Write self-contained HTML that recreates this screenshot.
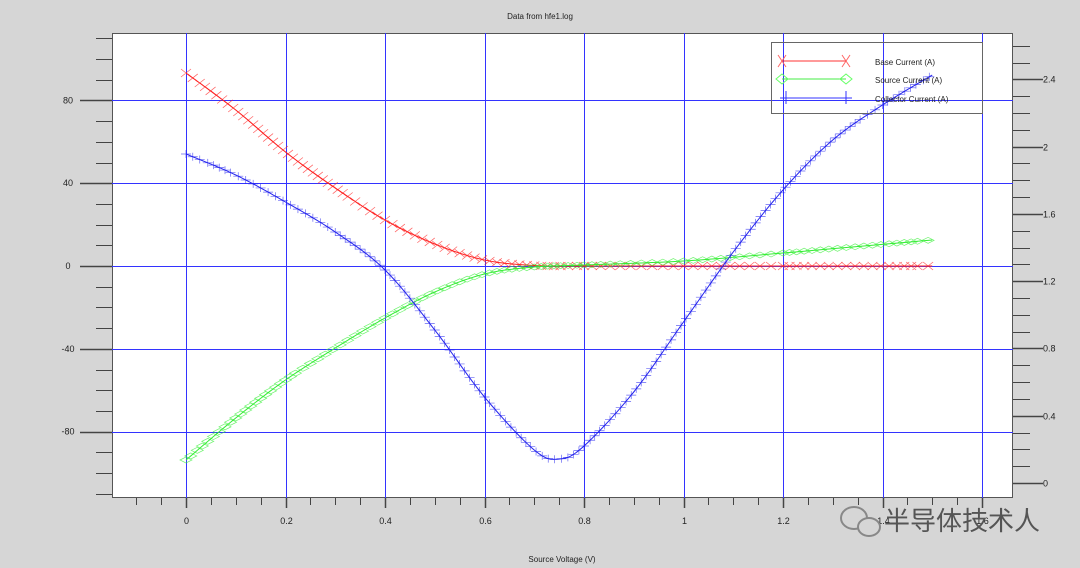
<!DOCTYPE html>
<html><head><meta charset="utf-8"><style>
html,body{margin:0;padding:0;background:#d6d6d6;width:1080px;height:568px;overflow:hidden}
svg{display:block}
text{font-family:"Liberation Sans",sans-serif;font-size:9px;fill:#222}
</style></head><body>
<svg id="s" width="1080" height="568" xmlns="http://www.w3.org/2000/svg">
<rect x="0" y="0" width="1080" height="568" fill="#d6d6d6"/>
<rect x="112.5" y="33.5" width="900" height="464" fill="#fff" stroke="#555" stroke-width="1"/>
<g id="grid" stroke="#3333ff" stroke-width="1"></g>
<g id="ticks" stroke="#444" stroke-width="1"></g>
<g id="labels"></g>
<g id="curves"></g>
<rect x="771.5" y="42.5" width="211" height="71" fill="none" stroke="#666" stroke-width="1"/>
<g font-size="8">
<line x1="782" y1="61" x2="846" y2="61" stroke="#f33"/>
<path d="M778 55l8 12M786 55l-8 12M842 55l8 12M850 55l-8 12" stroke="#f66" fill="none"/>
<line x1="782" y1="79" x2="846" y2="79" stroke="#4e4"/>
<path d="M776 79l6-5 6 5-6 5zM840 79l6-5 6 5-6 5z" stroke="#6f6" fill="none"/>
<line x1="780" y1="98" x2="852" y2="98" stroke="#33f"/>
<path d="M786 91v13M846 91v13" stroke="#33f"/>
<text x="875" y="65" style="font-size:8px">Base Current (A)</text>
<text x="875" y="83" style="font-size:8px">Source Current (A)</text>
<text x="875" y="102" style="font-size:8px">Collector Current (A)</text>
</g>
<text x="540" y="19" text-anchor="middle" style="font-size:8px">Data from hfe1.log</text>
<text x="562" y="562" text-anchor="middle" style="font-size:8px">Source Voltage (V)</text>
<g transform="translate(840,506)">
<ellipse cx="14" cy="12" rx="13" ry="11" fill="none" stroke="#888" stroke-width="2"/>
<ellipse cx="29" cy="21" rx="11" ry="9" fill="#d6d6d6" stroke="#888" stroke-width="2"/>
</g>
<text x="884" y="530" style="font-size:26px;fill:#555;font-family:'Liberation Sans','Noto Sans CJK SC',sans-serif">半导体技术人</text>
</svg>
<script>
var NS="http://www.w3.org/2000/svg";
function el(p,t,a,txt){var e=document.createElementNS(NS,t);for(var k in a)e.setAttribute(k,a[k]);if(txt)e.textContent=txt;p.appendChild(e);return e;}
var g=document.getElementById('grid'),tk=document.getElementById('ticks'),lb=document.getElementById('labels'),cv=document.getElementById('curves');
var X=function(v){return 186+v*497.5};
var P=function(x){return Math.round(x)+0.5};
for(var i=0;i<=8;i++){var x=P(X(i*0.2));el(g,'line',{x1:x,y1:33,x2:x,y2:498});}
var Y=function(v){return 266-v*2.07};
[80,40,0,-40,-80].forEach(function(v){var y=P(Y(v));el(g,'line',{x1:112,y1:y,x2:1013,y2:y});el(lb,'text',{x:68,y:Y(v)+3,'text-anchor':'middle'},String(v));});
for(var v=110;v>=-110;v-=10){var y=P(Y(v));if(y<36||y>495)continue;var maj=(v%40==0);el(tk,'line',{x1:maj?80:96,y1:y,x2:112,y2:y,'stroke-width':maj?1.5:1});}
for(var k=-3;k<=32;k++){var x=P(X(k*0.05));if(x<112||x>1013)continue;var maj=(k%4==0);el(tk,'line',{x1:x,y1:498,x2:x,y2:maj?508:505,'stroke-width':maj?1.5:1});
 if(maj)el(lb,'text',{x:x,y:524,'text-anchor':'middle'},String(+(k*0.05).toFixed(1)));}
var R=function(v){return 483-v*168.2};
for(var k=0;k<=27;k++){var y=P(R(k*0.1));if(y<36)continue;var maj=(k%4==0);el(tk,'line',{x1:1013,y1:y,x2:maj?1043:1030,y2:y,'stroke-width':maj?1.5:1});
 if(maj)el(lb,'text',{x:1043,y:y+3},String(+(k*0.1).toFixed(1)));}
function interp(pts,n){var out=[];for(var i=0;i<pts.length-1;i++){var p0=pts[Math.max(0,i-1)],p1=pts[i],p2=pts[i+1],p3=pts[Math.min(pts.length-1,i+2)];
 for(var s=0;s<n;s++){var t=s/n,t2=t*t,t3=t2*t;var f=function(a,b,c,d){return 0.5*((2*b)+(-a+c)*t+(2*a-5*b+4*c-d)*t2+(-a+3*b-3*c+d)*t3)};
 out.push([f(p0[0],p1[0],p2[0],p3[0]),f(p0[1],p1[1],p2[1],p3[1])]);}}out.push(pts[pts.length-1]);return out;}
function toPx(a){return a.map(function(p){return [X(p[0]),p[1]]});}
var red=toPx([[0,73],[0.1,110],[0.2,152],[0.3,188],[0.4,220],[0.5,244],[0.6,260],[0.7,265.5],[0.8,266],[1.0,266],[1.2,266],[1.5,266]]);
var grn=toPx([[0,460],[0.1,418],[0.2,380],[0.3,348],[0.4,318],[0.5,292],[0.6,274],[0.7,267],[0.8,265],[1.0,261],[1.2,253],[1.5,240]]);
var blu=toPx([[0,154],[0.1,175],[0.2,202],[0.3,232],[0.4,270],[0.5,330],[0.6,397],[0.7,450],[0.75,459],[0.8,446],[0.9,392],[1.0,322],[1.1,252],[1.2,190],[1.3,140],[1.4,105],[1.5,75]]);
function draw(pts,col,mk,step){var d=interp(pts,20);el(cv,'polyline',{points:d.map(function(p){return p[0]+','+p[1]}).join(' '),fill:'none',stroke:col,'stroke-width':1});
 var m='',acc=step;for(var i=0;i<d.length;i++){if(i>0){acc+=Math.hypot(d[i][0]-d[i-1][0],d[i][1]-d[i-1][1]);}
  if(acc<step)continue;acc=0;var x=d[i][0],y=d[i][1];
  if(mk=='x')m+='M'+(x-5)+' '+(y-4)+'l10 8M'+(x+5)+' '+(y-4)+'l-10 8';
  else if(mk=='d')m+='M'+(x-6)+' '+y+'l6-3 6 3-6 3z';
  else m+='M'+(x-5)+' '+y+'h10M'+x+' '+(y-4)+'v8';}
 el(cv,'path',{d:m,fill:'none',stroke:col,'stroke-width':0.7,opacity:0.7});}
draw(red,'#ff2020','x',6);draw(grn,'#33ee33','d',6);draw(blu,'#2222ee','+',6);
</script>
</body></html>
